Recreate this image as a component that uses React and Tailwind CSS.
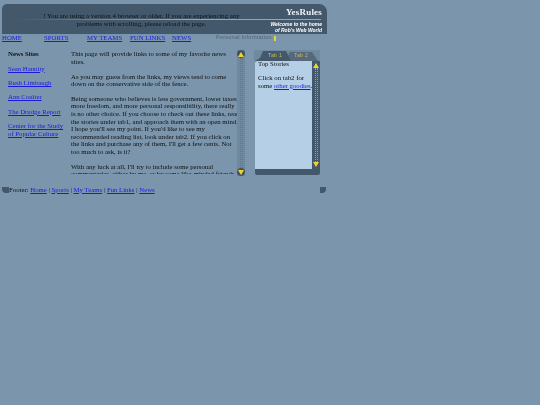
import React from "react";

function Arrow({ up, size = 5 }) {
  return (
    <svg width={size + 1} height={size} viewBox="0 0 6 5" className="block">
      <polygon points={up ? "3,0 6,5 0,5" : "0,0 6,0 3,5"} fill="#f2d22e" />
    </svg>
  );
}

function Scrollbar({ className }) {
  return (
    <div className={"flex flex-col items-center justify-between " + className}>
      <div className="w-[8px] h-[8px] rounded-full bg-[#3f5566] flex items-center justify-center"><Arrow up /></div>
      <div className="w-[3px] flex-1 border-x border-dotted border-[#5f7688]" />
      <div className="w-[8px] h-[8px] rounded-full bg-[#3f5566] flex items-center justify-center"><Arrow /></div>
    </div>
  );
}

const A = ({ children }) => <a href="#" className="text-[#1a1ae0] underline">{children}</a>;

export default function App() {
  return (
    <div className="min-h-[405px] bg-[#7b96ac] font-['Liberation_Serif',serif] text-[6.77px] leading-[7.6px] text-[#0d0f12] overflow-hidden">
      <div className="w-[327px] pt-[4px] blur-[0.25px]">
        <header className="relative ml-[2px] h-[30px] bg-[#43596b] rounded-tl-[5px] rounded-tr-[8px] flex overflow-hidden">
          <div className="absolute left-[12px] right-[6px] top-[14.5px] h-[1.5px] bg-gradient-to-r from-[#43596b] via-[#b5a658] to-[#b5a658]" />
          <div className="relative w-[279px] mr-[-34px] shrink-0 pt-[7.5px] text-center leading-[8px]">
            <p>! You are using a version 4 browser or older. If you are experiencing any</p>
            <p>problems with scrolling, please reload the page.</p>
          </div>
          <div className="relative w-[80px] shrink-0 flex flex-col items-end pr-[5px] pt-[3px] text-white">
            <div className="text-[9px] leading-[11px] font-bold tracking-[0.2px] text-[#eef2f5]">YesRules</div>
            <div className="mt-[4px] font-['Liberation_Sans',sans-serif] italic font-bold text-[5px] leading-[5.5px] text-right whitespace-nowrap">
              <div>Welcome to the home</div>
              <div>of Rob's Web World</div>
            </div>
          </div>
        </header>

        <nav className="flex items-center h-[8px] ml-[2px]">
          <div className="w-[42px]"><A>HOME</A></div>
          <div className="w-[43px]"><A>SPORTS</A></div>
          <div className="w-[43px]"><A>MY TEAMS</A></div>
          <div className="w-[42px]"><A>FUN LINKS</A></div>
          <div className="w-[44px]"><A>NEWS</A></div>
          <div className="flex items-center gap-[2px] font-['Liberation_Sans',sans-serif] text-[5.5px] tracking-[0.25px] text-[#4f6475]">
            Personal Information <span className="w-[2px] h-[5px] bg-[#e8d23c] inline-block" />
          </div>
        </nav>

        <main className="flex mt-[8px] h-[127px]">
          <aside className="w-[71px] pl-[8px] pr-[3px] pt-[0.3px] shrink-0">
            <p className="font-bold">News Sites</p>
            <p className="mt-[6.8px]"><A>Sean Hannity</A></p>
            <p className="mt-[6.8px]"><A>Rush Limbaugh</A></p>
            <p className="mt-[6.8px]"><A>Ann Coulter</A></p>
            <p className="mt-[6.8px]"><A>The Drudge Report</A></p>
            <p className="mt-[6.8px]"><A>Center for the Study of Popular Culture</A></p>
          </aside>

          <div className="w-[166px] shrink-0 overflow-hidden pt-[0.3px] h-[124px]">
            <div className="w-[168.5px]">
              <p>This page will provide links to some of my favorite news sites.</p>
              <p className="mt-[7.1px]">As you may guess from the links, my views tend to come down on the conservative side of the fence.</p>
              <p className="mt-[7.1px]">Being someone who believes is less government, lower taxes, more freedom, and more personal responsibility, there really is no other choice. If you choose to check out these links, read the stories under tab1, and approach them with an open mind, I hope you'll see my point. If you'd like to see my recommended reading list, look under tab2. If you click on the links and purchase any of them, I'll get a few cents. Not too much to ask, is it?</p>
              <p className="mt-[7.1px]">With any luck at all, I'll try to include some personal commentaries, either by me, or by some like-minded friends.</p>
            </div>
          </div>

          <Scrollbar className="w-[8px] h-[126px] bg-[#6f899e]" />

          <section className="relative ml-[9px] w-[66px] flex flex-col h-[125px]">
            <div className="relative h-[11px] bg-[#6f899e]">
              <svg width="66" height="11" viewBox="0 0 66 11" className="absolute inset-0">
                <polygon points="31,11 36,2 58,2 64,11" fill="#55697b" />
                <polygon points="1,11 6,8 9,1 32,1 37,11" fill="#43596b" />
              </svg>
              <div className="absolute top-[1.5px] left-[14px] font-['Liberation_Sans',sans-serif] text-[5.2px] leading-[6px] tracking-[0.3px] text-[#cdb94a]">Tab 1</div>
              <div className="absolute top-[1.5px] left-[40px] font-['Liberation_Sans',sans-serif] text-[5.2px] leading-[6px] tracking-[0.3px] text-[#cdb94a]">Tab 2</div>
            </div>
            <div className="flex flex-1 min-h-0 bg-[#b5d0e6] ml-[1px] rounded-tl-[3px]">
              <div className="relative flex-1 min-w-0 pl-[3px] mr-[-4px] mt-[-1.5px]">
                <p>Top Stories</p>
                <p className="mt-[7.1px]">Click on tab2 for<br />some <A>other goodies</A>.</p>
              </div>
              <div className="relative w-[8px] bg-[#43596b] flex flex-col items-center justify-between py-[2px] shrink-0">
                <Arrow up />
                <div className="flex-1 w-[3px] border-x border-dotted border-[#8ba3b6]" />
                <Arrow />
              </div>
            </div>
            <div className="h-[6px] ml-[1px] bg-[#43596b] rounded-b-[2px]" />
          </section>
        </main>

        <footer className="relative flex items-center mt-[8.5px] h-[8px] pl-[9px]">
          <div className="absolute left-[2px] top-[1px] w-[7px] h-[6px] bg-[#43596b] rounded-bl-[4px]" />
          <p>Footer: <A>Home</A> | <A>Sports</A> | <A>My Teams</A> | <A>Fun Links</A> | <A>News</A></p>
          <div className="absolute right-[1px] top-[1px] w-[6px] h-[6px] bg-[#43596b] rounded-br-[4px]" />
        </footer>
      </div>
    </div>
  );
}
